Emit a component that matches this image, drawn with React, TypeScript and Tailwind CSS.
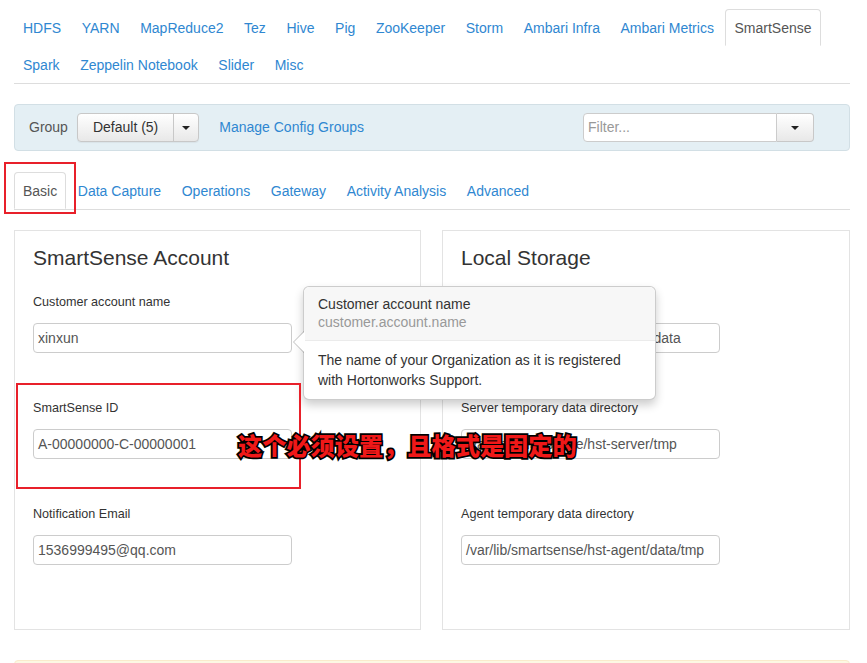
import React from 'react';

const serviceTabs = [
  'HDFS', 'YARN', 'MapReduce2', 'Tez', 'Hive', 'Pig', 'ZooKeeper', 'Storm',
  'Ambari Infra', 'Ambari Metrics', 'SmartSense', 'Spark', 'Zeppelin Notebook', 'Slider', 'Misc',
];

const subTabs = ['Basic', 'Data Capture', 'Operations', 'Gateway', 'Activity Analysis', 'Advanced'];

const Caret = () => (
  <span className="inline-block w-0 h-0 border-x-[4px] border-t-[4px] border-x-transparent border-t-[#222]" />
);

const Field = ({ label, value }: { label: string; value: string }) => (
  <div className="h-[106px]">
    <div className="text-[12.6px] leading-[18px] pt-[3px] text-[#333]">{label}</div>
    <div className="mt-[12px] w-[259px] h-[30px] border border-[#ccc] rounded-[4px] bg-white flex items-center pl-[4px] text-[14px] text-[#555] overflow-hidden whitespace-nowrap">
      {value}
    </div>
  </div>
);

const Tab = ({ name, active }: { name: string; active: boolean }) => (
  <div
    className={`h-[37px] px-[8px] mr-[2.6px] pt-[1px] border flex items-center text-[14px] rounded-t-[4px] ${
      active ? 'border-[#ddd] border-b-transparent bg-white text-[#555]' : 'border-transparent text-[#2f87d1]'
    }`}
  >
    {name}
  </div>
);

export default function App() {
  return (
    <div className="relative w-[867px] h-[663px] overflow-hidden bg-white text-[#333] font-['Liberation_Sans',Arial,sans-serif]">
      <div className="px-[14px] pt-[9px] w-[864px]">
        {/* service tabs */}
        <div className="flex flex-wrap border-b border-[#ddd]">
          {serviceTabs.map((t) => (
            <Tab key={t} name={t} active={t === 'SmartSense'} />
          ))}
        </div>

        {/* config group bar */}
        <div className="mt-[20px] h-[47px] bg-[#e4eff4] border border-[#d2dfe5] rounded-[4px] flex items-center pl-[14px] pr-[35px]">
          <span className="text-[14px] text-[#555]">Group</span>
          <div className="ml-[9px] flex h-[29px] rounded-[4px] border border-[#c8c8c8] bg-gradient-to-b from-white to-[#e8e8e8] shadow-[0_1px_1px_rgba(0,0,0,0.05)]">
            <div className="px-[15px] flex items-center text-[14px] text-[#333]">Default (5)</div>
            <div className="w-[25px] border-l border-[#c8c8c8] flex items-center justify-center">
              <Caret />
            </div>
          </div>
          <span className="ml-[20px] text-[14px] text-[#2f87d1]">Manage Config Groups</span>
          <div className="ml-auto flex h-[29px]">
            <div className="w-[194px] border border-[#ccc] rounded-l-[4px] bg-white flex items-center pl-[4px] text-[14px] text-[#999]">
              Filter...
            </div>
            <div className="w-[37px] border border-l-0 border-[#c8c8c8] rounded-r-[4px] bg-gradient-to-b from-white to-[#e8e8e8] flex items-center justify-center">
              <Caret />
            </div>
          </div>
        </div>

        {/* sub tabs */}
        <div className="mt-[21px] flex border-b border-[#ddd]">
          {subTabs.map((t) => (
            <Tab key={t} name={t} active={t === 'Basic'} />
          ))}
        </div>

        {/* panels */}
        <div className="mt-[20px] grid grid-cols-[407px_408px] gap-[21px]">
          <div className="h-[400px] border border-[#e3e3e3] px-[18px] pt-[13px]">
            <h3 className="text-[21px] leading-[28px] text-[#333]">SmartSense Account</h3>
            <div className="mt-[18px]">
              <Field label="Customer account name" value="xinxun" />
              <Field label="SmartSense ID" value="A-00000000-C-00000001" />
              <Field label="Notification Email" value="1536999495@qq.com" />
            </div>
          </div>
          <div className="h-[400px] border border-[#e3e3e3] px-[18px] pt-[13px]">
            <h3 className="text-[21px] leading-[28px] text-[#333]">Local Storage</h3>
            <div className="mt-[18px]">
              <Field label="Server data directory" value="/var/lib/smartsense/hst-server/data" />
              <Field label="Server temporary data directory" value="/var/lib/smartsense/hst-server/tmp" />
              <Field label="Agent temporary data directory" value="/var/lib/smartsense/hst-agent/data/tmp" />
            </div>
          </div>
        </div>

        {/* warning bar */}
        <div className="mt-[30px] h-[40px] bg-[#fcf8e3] border border-[#faebcc] rounded-[4px]" />
      </div>

      {/* popover */}
      <div className="absolute left-[303px] top-[286px] w-[353px] bg-white border border-[rgba(0,0,0,0.2)] rounded-[6px] shadow-[0_5px_10px_rgba(0,0,0,0.2)] text-[14px]">
        <div className="absolute left-[-11px] top-[44px] w-0 h-0 border-y-[11px] border-r-[11px] border-y-transparent border-r-[rgba(0,0,0,0.25)]" />
        <div className="absolute left-[-10px] top-[44px] w-0 h-0 border-y-[11px] border-r-[11px] border-y-transparent border-r-white" />
        <div className="bg-[#f7f7f7] border-b border-[#ebebeb] rounded-t-[6px] px-[14px] pt-[8px] pb-[9px] leading-[18px]">
          <div className="text-[#333]">Customer account name</div>
          <div className="text-[#999]">customer.account.name</div>
        </div>
        <div className="px-[14px] pt-[9px] pb-[9px] leading-[20px] text-[#333]">
          The name of your Organization as it is registered with Hortonworks Support.
        </div>
      </div>

      {/* annotations */}
      <div className="absolute left-[4px] top-[162px] w-[72px] h-[52px] border-2 border-[#e8202a]" />
      <div className="absolute left-[16px] top-[383px] w-[285px] h-[106px] border-2 border-[#e8202a]" />
      <div className="absolute left-[238px] top-[429px] text-[24.2px] leading-[32px] font-black text-[#f01818] [-webkit-text-stroke:3.5px_#000] [paint-order:stroke_fill] font-['Noto_Sans_CJK_SC',sans-serif]">
        这个必须设置，且格式是固定的
      </div>
    </div>
  );
}
